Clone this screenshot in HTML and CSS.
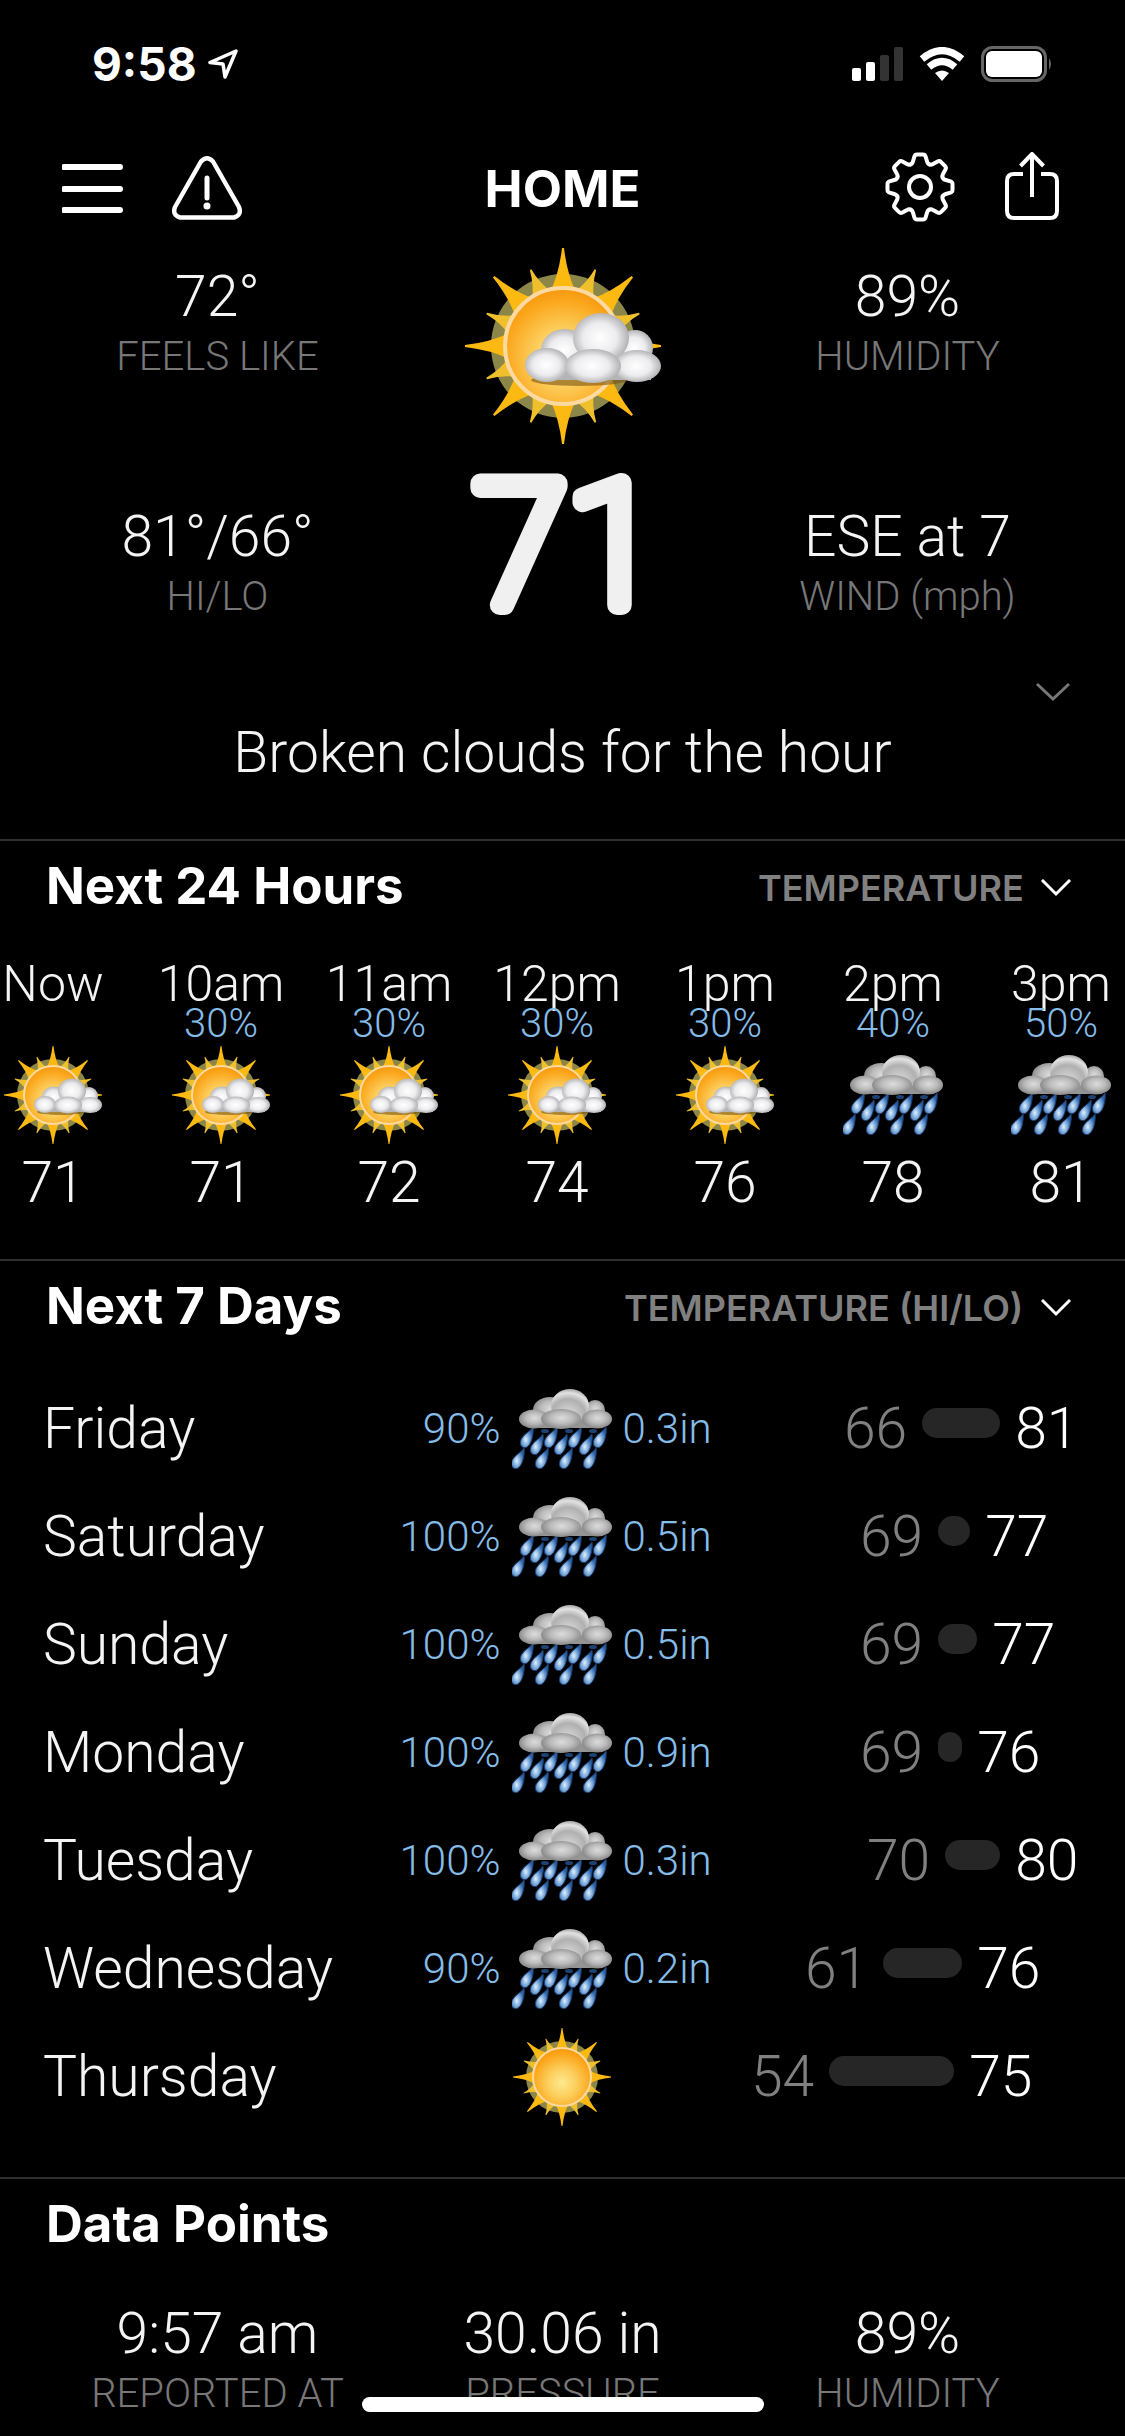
FILE: index.html
```html
<!DOCTYPE html>
<html lang="en">
<head>
<meta charset="utf-8">
<meta name="viewport" content="width=device-width, initial-scale=1">
<title>Home weather</title>
<link rel="stylesheet" href="styles.css">
</head>
<body>
<svg class="sprite" aria-hidden="true">
  <defs>
    <radialGradient id="disc" cx="50%" cy="60%" r="58%">
      <stop offset="0" stop-color="#fde98f"/><stop offset=".4" stop-color="#fcd060"/><stop offset=".85" stop-color="#fba71c"/><stop offset="1" stop-color="#f79a10"/>
    </radialGradient>
    <radialGradient id="puff" cx="48%" cy="50%" r="55%">
      <stop offset="0" stop-color="#fff"/><stop offset=".55" stop-color="#ececee"/><stop offset="1" stop-color="#a9a9ab"/>
    </radialGradient>
    <radialGradient id="puff-dark" cx="52%" cy="45%" r="56%">
      <stop offset="0" stop-color="#dcdcdc"/><stop offset=".5" stop-color="#bcbcbc"/><stop offset="1" stop-color="#848484"/>
    </radialGradient>
    <radialGradient id="puff-top" cx="45%" cy="75%" r="75%">
      <stop offset="0" stop-color="#dcdcdc"/><stop offset=".6" stop-color="#b0b0b0"/><stop offset=".85" stop-color="#e2e2e2"/><stop offset="1" stop-color="#a6a6a6"/>
    </radialGradient>
    <radialGradient id="drop-fill" cx="42%" cy="62%" r="55%">
      <stop offset="0" stop-color="#e3f0fb"/><stop offset=".4" stop-color="#8fb9e4"/><stop offset="1" stop-color="#2c62a8"/>
    </radialGradient>
    <path id="ray" d="M43.500 23Q48 14 49.500 1H50.500Q52 14 56.500 23Z" fill="#fbb912"/>
    <path id="ray-small" d="M44.500 23Q48.500 17 49.600 8.500H50.400Q51.500 17 55.500 23Z" fill="#f0bf2c"/>
    <path id="drop" d="M6-11C7-3 4 8-1 9.500C-7 10.500-8 4-5 0C-2-5 4-7 6-11Z" fill="url(#drop-fill)" stroke="#1b3f73" stroke-width="1"/>
    <path id="tooth" d="M-9.400-22.600Q-7.600-23.500-7.200-25L-5.600-30.500Q-5-32.500-3-32.500H3Q5-32.500 5.600-30.500L7.200-25Q7.600-23.500 9.400-22.600"/>
    <symbol id="sun" viewBox="0 0 100 100">
      <circle cx="50" cy="50" r="36" fill="#8d8649"/>
      <use href="#ray-small" transform="rotate(23 50 50)"/><use href="#ray-small" transform="rotate(67 50 50)"/>
      <use href="#ray-small" transform="rotate(113 50 50)"/><use href="#ray-small" transform="rotate(157 50 50)"/>
      <use href="#ray-small" transform="rotate(203 50 50)"/><use href="#ray-small" transform="rotate(247 50 50)"/>
      <use href="#ray-small" transform="rotate(293 50 50)"/><use href="#ray-small" transform="rotate(337 50 50)"/>
      <use href="#ray"/><use href="#ray" transform="rotate(45 50 50)"/><use href="#ray" transform="rotate(90 50 50)"/>
      <use href="#ray" transform="rotate(135 50 50)"/><use href="#ray" transform="rotate(180 50 50)"/><use href="#ray" transform="rotate(225 50 50)"/>
      <use href="#ray" transform="rotate(270 50 50)"/><use href="#ray" transform="rotate(315 50 50)"/>
      <circle cx="50" cy="50" r="29" fill="url(#disc)" stroke="#fbd9a0" stroke-width="2"/>
    </symbol>
    <symbol id="partly" viewBox="0 0 100 100">
      <use href="#sun" width="100" height="100"/>
      <ellipse cx="58" cy="67" rx="24" ry="3" fill="#7a5410" opacity=".6"/>
      <path d="M38 67H94V56L76 42L48 48L36 58Z" fill="#b4b4b6"/>
      <ellipse cx="51" cy="52" rx="12" ry="10.500" fill="url(#puff)"/>
      <ellipse cx="86" cy="51" rx="9" ry="9" fill="url(#puff)"/>
      <ellipse cx="69" cy="46" rx="14" ry="12.500" fill="url(#puff)"/>
      <ellipse cx="42" cy="59.500" rx="11" ry="8.500" fill="url(#puff)"/>
      <ellipse cx="87" cy="60" rx="12" ry="8" fill="url(#puff)"/>
      <ellipse cx="65" cy="60" rx="14" ry="8.500" fill="url(#puff)"/>
    </symbol>
    <symbol id="rain" viewBox="0 0 100 100">
      <g fill="#1d4272"><ellipse cx="33" cy="52" rx="4" ry="2"/><ellipse cx="57" cy="52" rx="4" ry="2"/><ellipse cx="81" cy="52" rx="4" ry="2"/></g>
      <use href="#drop" x="15" y="59"/><use href="#drop" x="39" y="59"/><use href="#drop" x="63" y="59"/><use href="#drop" x="88" y="59"/>
      <use href="#drop" x="25" y="66"/><use href="#drop" x="49" y="66"/><use href="#drop" x="74" y="66"/>
      <use href="#drop" x="6" y="80"/><use href="#drop" x="30" y="80"/><use href="#drop" x="54" y="80"/><use href="#drop" x="78" y="80"/>
      <path d="M18 49H90V36L70 24L36 30Z" fill="#949494"/>
      <ellipse cx="38" cy="31" rx="17" ry="13" fill="url(#puff-dark)"/>
      <ellipse cx="83" cy="31" rx="10" ry="10" fill="url(#puff-dark)"/>
      <ellipse cx="58" cy="27" rx="19" ry="17" fill="url(#puff-top)"/>
      <ellipse cx="22" cy="40" rx="15" ry="9.500" fill="url(#puff-dark)"/>
      <ellipse cx="85" cy="40" rx="15" ry="9.500" fill="url(#puff-dark)"/>
      <ellipse cx="49" cy="40" rx="20" ry="10" fill="url(#puff-dark)"/>
    </symbol>
  </defs>
</svg>

<header>
  <div class="status">
    <div class="status-side">
      <span class="clock">9:58</span>
      <svg width="30" height="30" viewBox="0 0 30 30"><path d="M28 2L2 13.500L15 15L17 28Z" fill="none" stroke="#fff" stroke-width="3.500" stroke-linejoin="round"/></svg>
    </div>
    <div class="status-side status-right">
      <svg width="51" height="34" viewBox="0 0 51 34"><g fill="#fff"><rect y="21" width="9" height="13" rx="2"/><rect x="14" y="15" width="9" height="19" rx="2"/></g><g fill="#333"><rect x="28" y="8" width="9" height="26" rx="2"/><rect x="42" width="9" height="34" rx="2"/></g></svg>
      <svg width="46" height="34" viewBox="0 0 46 34"><g fill="none" stroke="#fff" stroke-width="7"><path d="M3 12Q23-5 43 12"/><path d="M10 20Q23 9 36 20"/></g><path d="M16 26Q23 21 30 26L23 34Z" fill="#fff"/></svg>
      <svg width="72" height="36" viewBox="0 0 72 36"><rect x="1.500" y="1.500" width="63" height="33" rx="10" fill="none" stroke="#666" stroke-width="3"/><rect x="5" y="5" width="56" height="26" rx="6" fill="#fff"/><path d="M68 12Q72 18 68 24Z" fill="#666"/></svg>
    </div>
  </div>
  <nav class="nav">
    <div class="nav-group">
      <button type="button" aria-label="Menu"><svg width="62" height="72" viewBox="1 0 62 72"><path d="M3 15H59M3 37H59M3 58H59" stroke="#fff" stroke-width="6" stroke-linecap="round"/></svg></button>
      <button type="button" aria-label="Alerts"><svg width="72" height="72" viewBox="1 0 72 72"><g fill="none" stroke="#fff" stroke-width="4.500" stroke-linecap="round" stroke-linejoin="round"><path d="M30 9.500Q36 3 42 9.500L68 55Q71 63 63 65.500H9Q1 63 4 55Z"/><path d="M36 26V46" stroke-width="5"/></g><circle cx="36" cy="54" r="3.500" fill="#fff"/></svg></button>
    </div>
    <h1>HOME</h1>
    <div class="nav-group nav-right">
      <button type="button" aria-label="Settings"><svg width="72" height="72" viewBox="-35 -35 72 72"><g fill="none" stroke="#fff" stroke-width="4" stroke-linecap="round"><use href="#tooth"/><use href="#tooth" transform="rotate(45)"/><use href="#tooth" transform="rotate(90)"/><use href="#tooth" transform="rotate(135)"/><use href="#tooth" transform="rotate(180)"/><use href="#tooth" transform="rotate(225)"/><use href="#tooth" transform="rotate(270)"/><use href="#tooth" transform="rotate(315)"/><circle r="11"/></g></svg></button>
      <button type="button" aria-label="Share"><svg width="58" height="72" viewBox="0 1 58 72"><g fill="none" stroke="#fff" stroke-width="4"><path d="M18 23H9Q2 23 2 30V60Q2 67 9 67H45Q52 67 52 60V30Q52 23 45 23H36"/><path d="M27 46V3M15.500 15L27 3L38.500 15"/></g></svg></button>
    </div>
  </nav>
</header>

<main>
  <section class="current" aria-label="Current conditions">
    <div class="grid3">
      <dl class="stats">
        <div><dt>FEELS LIKE</dt><dd>72°</dd></div>
        <div><dt>HI/LO</dt><dd>81°/66°</dd></div>
      </dl>
      <div class="now">
        <svg width="200" height="200"><use href="#partly"/></svg>
        <svg class="now-temp" width="240" height="160"><text x="124" y="140">71</text></svg>
      </div>
      <dl class="stats">
        <div><dt>HUMIDITY</dt><dd>89%</dd></div>
        <div><dt>WIND (mph)</dt><dd>ESE at 7</dd></div>
      </dl>
    </div>
    <button class="more" type="button" aria-label="More details"><svg width="36" height="20" viewBox="0 0 36 20"><path d="M2 2L18 17L34 2" fill="none" stroke="#777" stroke-width="3"/></svg></button>
    <p class="summary">Broken clouds for the hour</p>
  </section>

  <section class="panel">
    <div class="panel-head">
      <h2>Next 24 Hours</h2>
      <label class="picker"><select aria-label="Hourly value"><option>TEMPERATURE</option></select><svg width="32" height="18" viewBox="0 0 32 18"><path d="M2 1L16 15L30 1" fill="none" stroke="#fff" stroke-width="3"/></svg></label>
    </div>
    <ul class="hours">
      <li><span class="hour">Now</span><span class="chance"></span><svg class="icon"><use href="#partly"/></svg><span class="temp">71</span></li>
      <li><span class="hour">10am</span><span class="chance">30%</span><svg class="icon"><use href="#partly"/></svg><span class="temp">71</span></li>
      <li><span class="hour">11am</span><span class="chance">30%</span><svg class="icon"><use href="#partly"/></svg><span class="temp">72</span></li>
      <li><span class="hour">12pm</span><span class="chance">30%</span><svg class="icon"><use href="#partly"/></svg><span class="temp">74</span></li>
      <li><span class="hour">1pm</span><span class="chance">30%</span><svg class="icon"><use href="#partly"/></svg><span class="temp">76</span></li>
      <li><span class="hour">2pm</span><span class="chance">40%</span><svg class="icon"><use href="#rain"/></svg><span class="temp">78</span></li>
      <li><span class="hour">3pm</span><span class="chance">50%</span><svg class="icon"><use href="#rain"/></svg><span class="temp">81</span></li>
    </ul>
  </section>

  <section class="panel">
    <div class="panel-head">
      <h2>Next 7 Days</h2>
      <label class="picker"><select aria-label="Daily value"><option>TEMPERATURE (HI/LO)</option></select><svg width="32" height="18" viewBox="0 0 32 18"><path d="M2 1L16 15L30 1" fill="none" stroke="#fff" stroke-width="3"/></svg></label>
    </div>
    <ul class="days">
      <li><div class="cell"><span class="day">Friday</span><span class="rain">90%</span></div><svg class="icon"><use href="#rain"/></svg><div class="cell"><span class="rain">0.3in</span><div class="range"><span class="low" style="margin-left:93px">66</span><span class="bar" style="width:78px"></span><span class="high">81</span></div></div></li>
      <li><div class="cell"><span class="day">Saturday</span><span class="rain">100%</span></div><svg class="icon"><use href="#rain"/></svg><div class="cell"><span class="rain">0.5in</span><div class="range"><span class="low" style="margin-left:109px">69</span><span class="bar" style="width:32px"></span><span class="high">77</span></div></div></li>
      <li><div class="cell"><span class="day">Sunday</span><span class="rain">100%</span></div><svg class="icon"><use href="#rain"/></svg><div class="cell"><span class="rain">0.5in</span><div class="range"><span class="low" style="margin-left:109px">69</span><span class="bar" style="width:39px"></span><span class="high">77</span></div></div></li>
      <li><div class="cell"><span class="day">Monday</span><span class="rain">100%</span></div><svg class="icon"><use href="#rain"/></svg><div class="cell"><span class="rain">0.9in</span><div class="range"><span class="low" style="margin-left:109px">69</span><span class="bar" style="width:24px"></span><span class="high">76</span></div></div></li>
      <li><div class="cell"><span class="day">Tuesday</span><span class="rain">100%</span></div><svg class="icon"><use href="#rain"/></svg><div class="cell"><span class="rain">0.3in</span><div class="range"><span class="low" style="margin-left:116px">70</span><span class="bar" style="width:55px"></span><span class="high">80</span></div></div></li>
      <li><div class="cell"><span class="day">Wednesday</span><span class="rain">90%</span></div><svg class="icon"><use href="#rain"/></svg><div class="cell"><span class="rain">0.2in</span><div class="range"><span class="low" style="margin-left:54px">61</span><span class="bar" style="width:79px"></span><span class="high">76</span></div></div></li>
      <li><div class="cell"><span class="day">Thursday</span><span class="rain"></span></div><svg class="icon"><use href="#sun"/></svg><div class="cell"><span class="rain"></span><div class="range"><span class="low" style="margin-left:0px">54</span><span class="bar" style="width:125px"></span><span class="high">75</span></div></div></li>
    </ul>
  </section>

  <section class="panel data">
    <div class="panel-head"><h2>Data Points</h2></div>
    <dl class="grid3">
      <div><dt>REPORTED AT</dt><dd>9:57 am</dd></div>
      <div><dt>PRESSURE</dt><dd>30.06 in</dd></div>
      <div><dt>HUMIDITY</dt><dd>89%</dd></div>
    </dl>
  </section>
</main>
<div class="home-indicator"></div>
</body>
</html>
```
FILE: styles.css
```css
* { box-sizing: border-box; margin: 0; padding: 0; }

body {
  background: #000;
  color: #f4f4f4;
  font: 300 57px/60px Roboto, "Liberation Sans", sans-serif;
  overflow-x: hidden;
}

svg { display: block; flex: none; }
ul { list-style: none; }
button { background: none; border: 0; cursor: pointer; }
.sprite { position: absolute; width: 0; height: 0; }

h1, h2, .clock, select { font-family: Inter, "Liberation Sans", sans-serif; color: #fff; }
h1, h2 { font-size: 51px; font-weight: 700; }
h1 { padding-top: 2px; }

/* Status bar */
.status { display: flex; justify-content: space-between; padding: 34px 72px 0 92px; }
.status-side { display: flex; align-items: center; gap: 11px; }
.status-right { gap: 16px; }
.clock { font-size: 46px; font-weight: 700; }

/* Navigation */
.nav {
  display: grid;
  grid-template-columns: 1fr auto 1fr;
  align-items: center;
  margin-top: 58px;
  padding: 0 62px;
}
.nav-group { display: flex; gap: 48px; }
.nav-right { justify-content: flex-end; }

/* Current conditions */
.current { padding: 22px 45px 56px; }
.grid3 { display: grid; grid-template-columns: repeat(3, 1fr); text-align: center; }
.grid3 dl > div, dl.grid3 > div { display: flex; flex-direction: column-reverse; }
.stats { display: flex; flex-direction: column; gap: 120px; padding-top: 21px; }
dt { font-size: 40px; color: #777; }
.now { display: flex; flex-direction: column; align-items: center; gap: 19px; }
.now-temp text {
  font: 100 170px Roboto, sans-serif;
  text-anchor: middle;
  fill: #f0f0f0;
  stroke: #f0f0f0;
  stroke-width: 20px;
  stroke-linejoin: round;
}
.more { display: flex; align-items: center; justify-content: center; width: 54px; height: 48px; margin: 41px 0 7px auto; }
.summary { text-align: center; }

/* Panels */
.panel { border-top: 2px solid #303030; padding: 15px 0 46px; }
.panel-head { display: flex; justify-content: space-between; align-items: center; padding: 0 53px 0 46px; }
.picker { display: flex; align-items: center; gap: 16px; padding-top: 4px; }
select {
  appearance: none;
  background: none;
  border: 0;
  color: #808080;
  font-size: 36px;
  font-weight: 600;
  line-height: 44px;
}

/* Hourly strip, scrolled sideways */
.hours { display: flex; margin: 44px 0 0 -31px; overflow: hidden; }
.hours li { display: flex; flex: none; flex-direction: column; align-items: center; width: 168px; }
.icon { width: 100px; height: 100px; }
.hour { font-size: 50px; line-height: 48px; }
.chance { height: 32px; margin-bottom: 5px; font-size: 40px; line-height: 32px; color: #86bce8; }
.temp { margin-top: 8px; }

/* Daily list */
.days { margin-top: 39px; padding: 0 45px 0 43px; }
.days li { display: grid; grid-template-columns: 1fr 100px 1fr; align-items: center; gap: 11px; height: 108px; }
.cell { display: flex; align-items: center; justify-content: space-between; }
.rain { font-size: 42px; color: #86bce8; }
.range { display: flex; align-items: center; gap: 15px; width: 329px; }
.low { color: #808080; }
.high { color: #fff; }
.bar { height: 30px; margin-bottom: 12px; border-radius: 15px; background: #262626; }

/* Data points */
.data { padding-bottom: 11px; }
.data .grid3 { margin-top: 50px; padding: 0 45px; }

.home-indicator {
  position: fixed;
  bottom: 24px;
  left: 50%;
  width: 402px;
  height: 15px;
  margin-left: -201px;
  border-radius: 8px;
  background: #fff;
}
```
